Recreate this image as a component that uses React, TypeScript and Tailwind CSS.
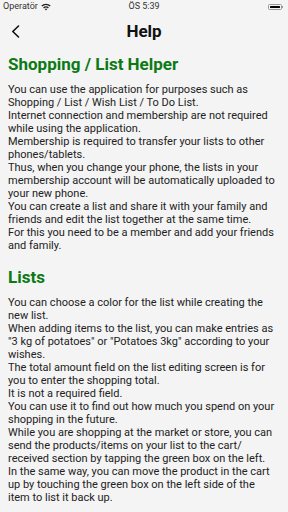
const intro = [
  'You can use the application for purposes such as Shopping / List / Wish List / To Do List.',
  'Internet connection and membership are not required while using the application.',
  'Membership is required to transfer your lists to other phones/tablets.',
  'Thus, when you change your phone, the lists in your membership account will be automatically uploaded to your new phone.',
  'You can create a list and share it with your family and friends and edit the list together at the same time.',
  'For this you need to be a member and add your friends and family.',
];

const lists = [
  'You can choose a color for the list while creating the new list.',
  'When adding items to the list, you can make entries as "3 kg of potatoes" or "Potatoes 3kg" according to your wishes.',
  'The total amount field on the list editing screen is for you to enter the shopping total.',
  'It is not a required field.',
  'You can use it to find out how much you spend on your shopping in the future.',
  'While you are shopping at the market or store, you can send the products/items on your list to the cart/ received section by tapping the green box on the left.',
  'In the same way, you can move the product in the cart up by touching the green box on the left side of the item to list it back up.',
];

function Section({ title, paras }: { title: string; paras: string[] }) {
  return (
    <div>
      <h2 className="text-[17px] font-bold leading-[22px] text-[#0b7a14]">{title}</h2>
      <div className="mt-[8px] text-[11px] leading-[13px] text-[#222]">
        {paras.map((p) => (
          <p key={p}>{p}</p>
        ))}
      </div>
    </div>
  );
}

export default function App() {
  return (
    <div
      className="w-[288px] h-[512px] overflow-hidden bg-[#f4f4f4]"
      style={{ fontFamily: 'Roboto, "Noto Sans", sans-serif' }}
    >
      {/* status bar */}
      <div className="h-[13px] px-[3px] flex items-center justify-between text-[9px] text-[#333]">
        <div className="flex items-center gap-[3px] w-[80px]">
          <span>Operatör</span>
          <svg width="10" height="8" viewBox="0 0 10 8">
            <path d="M0.3 2.6 A6.6 6.6 0 0 1 9.7 2.6 L8.7 3.6 A5.2 5.2 0 0 0 1.3 3.6 Z" fill="#222" />
            <path d="M2.1 4.4 A4 4 0 0 1 7.9 4.4 L6.9 5.4 A2.6 2.6 0 0 0 3.1 5.4 Z" fill="#222" />
            <path d="M3.9 6.2 A1.5 1.5 0 0 1 6.1 6.2 L5 7.4 Z" fill="#222" />
          </svg>
        </div>
        <span>ÖS 5:39</span>
        <div className="w-[80px] flex justify-end pr-[2px]">
          <div className="flex items-center">
            <div className="w-[14px] h-[6px] rounded-[1.5px] border border-[#999] p-[1px]">
              <div className="w-full h-full bg-black rounded-[0.5px]" />
            </div>
            <div className="w-[1px] h-[2px] bg-[#999]" />
          </div>
        </div>
      </div>

      {/* header */}
      <div className="h-[36px] relative flex items-center justify-center">
        <svg className="absolute left-[11px] top-[12px]" width="9" height="13" viewBox="0 0 9 13">
          <path d="M7.5 1 L1.8 6.5 L7.5 12" fill="none" stroke="#111" strokeWidth="1.6" strokeLinecap="round" strokeLinejoin="round" />
        </svg>
        <h1 className="text-[17px] font-bold text-[#111] mt-[2px]">Help</h1>
      </div>

      <div className="pl-[8px] pr-[12px] pt-[4px] flex flex-col gap-[14px]">
        <Section title="Shopping / List Helper" paras={intro} />
        <Section title="Lists" paras={lists} />
      </div>
    </div>
  );
}
